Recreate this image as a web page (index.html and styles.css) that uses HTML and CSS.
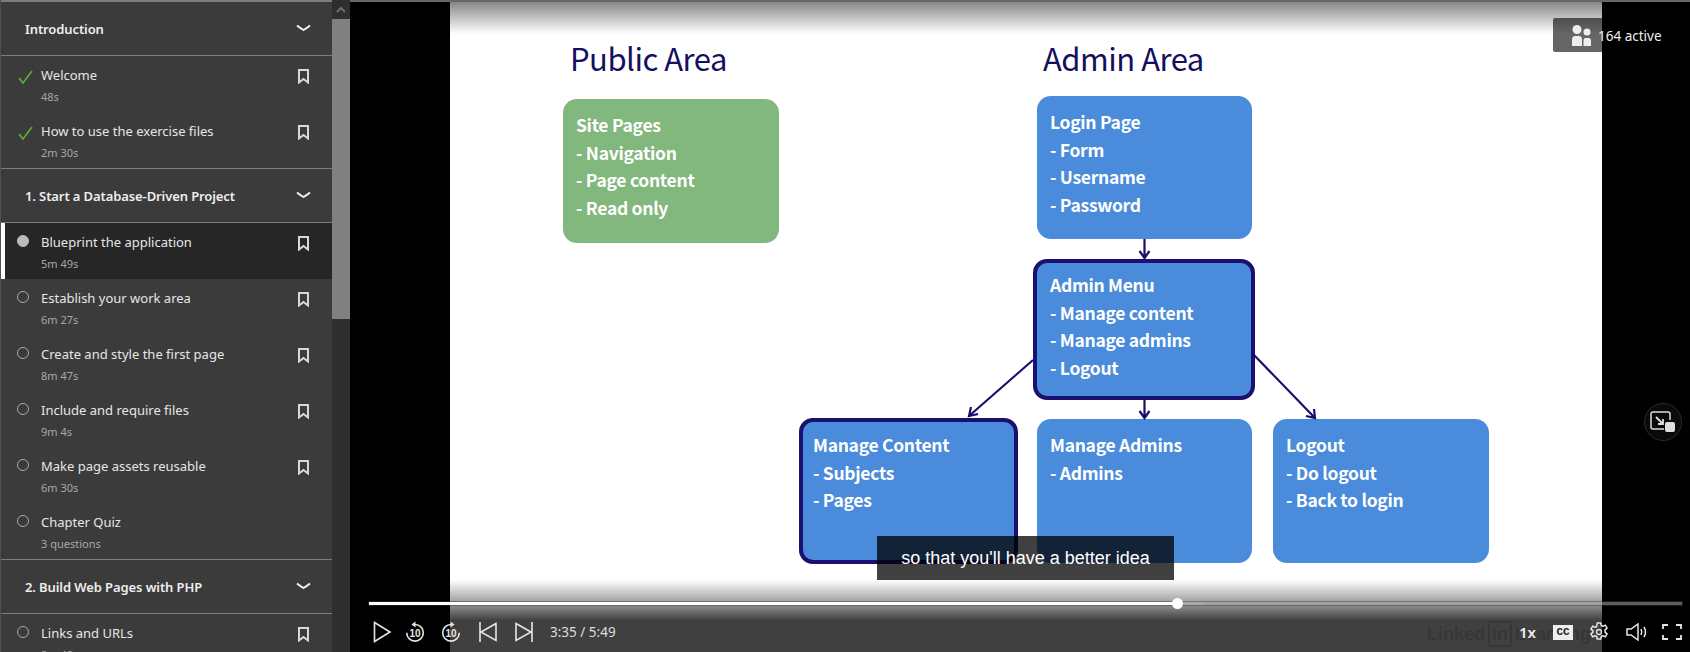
FILE: index.html
```html
<!DOCTYPE html>
<html lang="en">
<head>
    <meta charset="UTF-8">
    <title>Blueprint the application</title>
    <link rel="stylesheet" href="styles.css">
</head>
<body>
    <svg class="defs" width="0" height="0">
        <symbol id="bookmark" viewBox="0 0 11 15"><path d="M1 1h9v12.500L5.500 10 1 13.500z" fill="none" stroke="currentColor" stroke-width="2"/></symbol>
        <symbol id="chevron" viewBox="0 0 15 8"><path d="M1 1.500Q4 4 7.500 6 11 4 14 1.500" fill="none" stroke="currentColor" stroke-width="2"/></symbol>
        <symbol id="check" viewBox="0 0 15 14"><path d="M1 8l4 5L14 1" fill="none" stroke="#5fa83f" stroke-width="1.700"/></symbol>
    </svg>

    <aside class="sidebar">
        <div class="toc">
            <div class="chapter"><span>Introduction</span><svg class="chev"><use href="#chevron"/></svg></div>
            <div class="row"><svg class="check"><use href="#check"/></svg><div class="row-text"><p class="title">Welcome</p><p class="dur">48s</p></div><svg class="mark"><use href="#bookmark"/></svg></div>
            <div class="row"><svg class="check"><use href="#check"/></svg><div class="row-text"><p class="title">How to use the exercise files</p><p class="dur">2m 30s</p></div><svg class="mark"><use href="#bookmark"/></svg></div>

            <div class="chapter"><span>1. Start a Database-Driven Project</span><svg class="chev"><use href="#chevron"/></svg></div>
            <div class="row active"><i class="dot filled"></i><div class="row-text"><p class="title">Blueprint the application</p><p class="dur">5m 49s</p></div><svg class="mark"><use href="#bookmark"/></svg></div>
            <div class="row"><i class="dot"></i><div class="row-text"><p class="title">Establish your work area</p><p class="dur">6m 27s</p></div><svg class="mark"><use href="#bookmark"/></svg></div>
            <div class="row"><i class="dot"></i><div class="row-text"><p class="title">Create and style the first page</p><p class="dur">8m 47s</p></div><svg class="mark"><use href="#bookmark"/></svg></div>
            <div class="row"><i class="dot"></i><div class="row-text"><p class="title">Include and require files</p><p class="dur">9m 4s</p></div><svg class="mark"><use href="#bookmark"/></svg></div>
            <div class="row"><i class="dot"></i><div class="row-text"><p class="title">Make page assets reusable</p><p class="dur">6m 30s</p></div><svg class="mark"><use href="#bookmark"/></svg></div>
            <div class="row"><i class="dot"></i><div class="row-text"><p class="title">Chapter Quiz</p><p class="dur">3 questions</p></div></div>

            <div class="chapter"><span>2. Build Web Pages with PHP</span><svg class="chev"><use href="#chevron"/></svg></div>
            <div class="row"><i class="dot"></i><div class="row-text"><p class="title">Links and URLs</p><p class="dur">8m 48s</p></div><svg class="mark"><use href="#bookmark"/></svg></div>
        </div>
        <div class="scrollbar">
            <svg class="scroll-up" width="18" height="19" viewBox="0 0 18 19"><path d="M5 12l4-4 4 4" fill="none" stroke="#6c6c6c" stroke-width="2"/></svg>
            <div class="scroll-thumb"></div>
        </div>
    </aside>

    <main class="video">
        <div class="slide">
            <h2 class="area area-public">Public Area</h2>
            <h2 class="area area-admin">Admin Area</h2>

            <div class="node green n-site">Site Pages<br>- Navigation<br>- Page content<br>- Read only</div>
            <div class="node n-login">Login Page<br>- Form<br>- Username<br>- Password</div>
            <div class="node outlined n-menu">Admin Menu<br>- Manage content<br>- Manage admins<br>- Logout</div>
            <div class="node outlined n-content">Manage Content<br>- Subjects<br>- Pages</div>
            <div class="node n-admins">Manage Admins<br>- Admins</div>
            <div class="node n-logout">Logout<br>- Do logout<br>- Back to login</div>

            <!-- arrows use slide coordinates -->
            <svg class="arrows" width="1152" height="652" viewBox="0 0 1152 652">
                <g fill="none" stroke="#17106a" stroke-width="2.200">
                    <path d="M694.500 239V258M689.500 251l5 7 5-7"/>
                    <path d="M694.500 400V418M689.500 411l5 7 5-7"/>
                    <path d="M583 360L519 416M521 407l-2 9 9-2"/>
                    <path d="M804 355L865 418M864 409l1 9-9-2"/>
                </g>
            </svg>

            <div class="watermark">Linked<b>in</b>Learning</div>
        </div>

        <div class="shade-top"></div>
        <div class="shade-bottom"></div>
        <div class="top-line"></div>

        <div class="active-badge">
            <svg width="19" height="21" viewBox="0 0 19 21"><circle cx="5" cy="4.500" r="4.500" fill="#eee"/><circle cx="15" cy="7" r="3.500" fill="#eee"/><path d="M0 21v-6q0-4 3-4h4q3 0 3 4v6zM11.500 21v-5q0-3 2-3h3q2.500 0 2.500 3v5z" fill="#eee"/></svg>
            <span>164 active</span>
        </div>

        <div class="pip">
            <svg width="26" height="22" viewBox="0 0 26 22"><path d="M14 18H3q-2 0-2-2V3q0-2 2-2h15q2 0 2 2v6" fill="none" stroke="#ddd" stroke-width="1.500"/><path d="M6 6l7 7M8 13h5V8" fill="none" stroke="#ddd" stroke-width="1.800"/><rect x="15" y="11" width="10" height="10" rx="2" fill="#ddd"/></svg>
        </div>

        <div class="caption">so that you'll have a better idea</div>

        <div class="progress">
            <div class="buffered"></div>
            <div class="played"></div>
            <div class="knob"></div>
        </div>

        <div class="controls">
            <svg class="ctl play" width="19" height="22" viewBox="0 0 19 22"><path d="M1.500 1.500L17 11 1.500 20.500z" fill="none" stroke="#e6e6e6" stroke-width="1.600"/></svg>
            <svg class="ctl skip-back" width="20" height="22" viewBox="0 0 20 22"><path d="M10 3.500a8.300 8.300 0 1 1-8.300 8.300" fill="none" stroke="#e6e6e6" stroke-width="1.600"/><path d="M10.500 0.500L6.500 3.500l4 3z" fill="#e6e6e6"/><text x="10" y="16" class="ten">10</text></svg>
            <svg class="ctl skip-fwd" width="20" height="22" viewBox="0 0 20 22"><path d="M10 3.500a8.300 8.300 0 1 0 8.300 8.300" fill="none" stroke="#e6e6e6" stroke-width="1.600"/><path d="M9.500 0.500l4 3-4 3z" fill="#e6e6e6"/><text x="10" y="16" class="ten">10</text></svg>
            <svg class="ctl prev" width="18" height="20" viewBox="0 0 18 20"><path d="M1 0v20M17 1.500L2 10l15 8.500z" fill="none" stroke="#e6e6e6" stroke-width="1.600"/></svg>
            <svg class="ctl next" width="18" height="20" viewBox="0 0 18 20"><path d="M17 0v20M1 1.500L16 10 1 18.500z" fill="none" stroke="#e6e6e6" stroke-width="1.600"/></svg>
            <span class="time">3:35 / 5:49</span>
            <span class="spacer"></span>
            <span class="speed">1x</span>
            <span class="cc">CC</span>
            <svg class="ctl gear" width="20" height="20" viewBox="0 0 20 20"><path d="M8.200 1h3.600l.5 2.500 1.700.8 2.300-1.200 1.800 3-2 1.600v2.600l2 1.600-1.800 3-2.300-1.200-1.700.8-.5 2.500H8.200l-.5-2.500-1.700-.8-2.300 1.200-1.800-3 2-1.600V8.700l-2-1.600 1.800-3L6 5.300l1.700-.8z" fill="none" stroke="#e6e6e6" stroke-width="1.500" stroke-linejoin="round"/><circle cx="10" cy="10" r="2.500" fill="none" stroke="#e6e6e6" stroke-width="1.300"/></svg>
            <svg class="ctl volume" width="22" height="18" viewBox="0 0 22 18"><path d="M1 6h4l7-5v16l-7-5H1z" fill="none" stroke="#e6e6e6" stroke-width="1.500"/><path d="M15 6q1.500 3 0 6M18 4q3 5 0 10" fill="none" stroke="#e6e6e6" stroke-width="1.500"/></svg>
            <svg class="ctl full" width="20" height="16" viewBox="0 0 20 16"><path d="M1 5V1h5M14 1h5v4M19 11v4h-5M6 15H1v-4" fill="none" stroke="#e6e6e6" stroke-width="1.800"/></svg>
        </div>
    </main>
</body>
</html>
```

FILE: styles.css
```css
* { box-sizing: border-box; }
html, body { margin: 0; height: 100%; overflow: hidden; }
body { display: flex; background: #000; font-family: "Noto Sans", Arial, sans-serif; }
.defs { position: absolute; }

/* course list */
.sidebar { width: 350px; height: 652px; flex: none; display: flex; overflow: hidden; border-left: 1px solid #46525a; background: #3b3b3b; }
.toc { width: 331px; flex: none; border-top: 2px solid #7d7d7d; }
.chapter { height: 54px; display: flex; align-items: center; justify-content: space-between; padding: 0 21px 0 24px; border-bottom: 1px solid #7d7d7d; color: #eee; font-size: 13px; font-weight: 600; letter-spacing: -.1px; }
.row + .chapter { border-top: 1px solid #7d7d7d; height: 55px; }
.chev { width: 15px; height: 8px; color: #f2f2f2; margin-bottom: 2px; }
.row { height: 56px; position: relative; display: flex; padding: 10px 23px 0 17px; color: #e6e6e6; }
.row.active { background: #262626; border-left: 4px solid #fff; padding-left: 13px; }
.check { width: 15px; height: 14px; margin-top: 4px; flex: none; }
.dot { width: 12px; height: 12px; margin: 2px 3px 0 -1px; flex: none; border: 1px solid #aaa; border-radius: 50%; }
.dot.filled { background: #bbb; border-color: #bbb; }
.row-text { flex: 1; margin-left: 8px; }
.dot + .row-text { margin-left: 9px; }
.title { margin: 0; font-size: 13px; line-height: 18px; }
.dur { margin: 5px 0 0; font-size: 11px; line-height: 16px; color: #a8a8a8; }
.mark { width: 11px; height: 15px; margin-top: 3px; color: #d8d8d8; flex: none; }

.scrollbar { width: 18px; flex: none; background: #2e2e2e; }
.scroll-up { display: block; }
.scroll-thumb { height: 300px; background: #808080; }

/* player */
.video { position: relative; flex: 1; height: 652px; overflow: hidden; background: #000; }
.slide { position: relative; width: 1152px; height: 652px; margin-left: 100px; background: #fff; font-family: "Noto Sans CJK JP", "Noto Sans", sans-serif; }
.top-line { position: absolute; top: 0; left: 0; right: 0; height: 2px; background: #666; }
.shade-top { position: absolute; top: 0; left: 0; right: 0; height: 34px; background: linear-gradient(rgba(0,0,0,.5), rgba(0,0,0,0)); }
.shade-bottom { position: absolute; bottom: 0; left: 0; right: 0; height: 72px; background: linear-gradient(rgba(0,0,0,0), rgba(0,0,0,.34) 28%, rgba(0,0,0,.75) 56%); }

.area { position: absolute; margin: 0; font-size: 31px; font-weight: 400; line-height: 44px; letter-spacing: -.5px; color: #14105f; }
.area-public { left: 120px; top: 36px; }
.area-admin { left: 593px; top: 36px; }

/* diagram nodes: slide coordinates */
.node { position: absolute; padding: 12px 13px; border-radius: 14px; background: #4a8bdb; color: #fff; font-size: 17.500px; font-weight: 700; line-height: 27.700px; letter-spacing: -.3px; }
.node.green { background: #82b77d; }
.node.outlined { border: 4px solid #1a1070; padding: 9px 10px; }
.node.n-menu { padding: 8px 13px; }
.n-site { left: 113px; top: 99px; width: 216px; height: 144px; }
.n-login { left: 587px; top: 96px; width: 215px; height: 143px; }
.n-menu { left: 583px; top: 259px; width: 222px; height: 141px; }
.n-content { left: 349px; top: 418px; width: 219px; height: 146px; }
.n-admins { left: 587px; top: 419px; width: 215px; height: 144px; }
.n-logout { left: 823px; top: 419px; width: 216px; height: 144px; }
.arrows { position: absolute; left: 0; top: 0; }

/* sits under the bottom shade, so it comes out just darker than the bar */
.watermark { position: absolute; left: 977px; top: 621px; display: flex; align-items: center; gap: 3px; font-family: "Liberation Sans", sans-serif; font-size: 18px; font-weight: 700; line-height: 22px; color: #d8d8d8; white-space: nowrap; }
.watermark b { border: 2px solid #d8d8d8; border-radius: 3px; padding: 0 2px; }

.active-badge { position: absolute; left: 1203px; top: 18px; width: 120px; height: 34px; display: flex; align-items: center; gap: 7px; padding: 1px 0 0 19px; border-radius: 2px; background: rgba(0,0,0,.6); color: #eee; font-size: 13.500px; }

.pip { position: absolute; left: 1294px; top: 403px; width: 38px; height: 38px; display: flex; align-items: center; justify-content: center; border: 1px solid #2a2a2a; border-radius: 50%; background: #0a0a0a; }

.caption { position: absolute; left: 527px; top: 536px; width: 297px; height: 44px; display: flex; align-items: center; justify-content: center; background: rgba(0,0,0,.75); color: #fff; font-family: "Liberation Sans", Arial, sans-serif; font-size: 18px; }

.progress { position: absolute; left: 19px; top: 602px; width: 1313px; height: 3px; background: rgba(170,170,170,.55); box-shadow: 0 0 0 1px rgba(60,60,60,.45); }
.buffered { position: absolute; left: 0; top: 0; width: 836px; height: 3px; background: #aaa; }
.played { position: absolute; left: 0; top: 0; width: 809px; height: 3px; background: #fff; }
.knob { position: absolute; left: 803px; top: -4px; width: 11px; height: 11px; border-radius: 50%; background: #fff; }

.controls { position: absolute; left: 23px; right: 8px; top: 620px; height: 24px; display: flex; align-items: center; color: #e6e6e6; }
.ctl { flex: none; }
.play { margin-right: 13px; }
.skip-back { margin-right: 16px; }
.skip-fwd { margin-right: 18px; }
.prev { margin-right: 18px; }
.next { margin-right: 17px; }
.ten { font-family: "Liberation Sans", sans-serif; font-size: 10px; font-weight: 700; fill: #e6e6e6; text-anchor: middle; }
.time { font-size: 13.500px; color: #ddd; }
.spacer { flex: 1; }
.speed { font-size: 15px; font-weight: 600; color: #f0f0f0; margin-right: 17px; }
.cc { width: 20px; height: 15px; display: flex; align-items: center; justify-content: center; margin-right: 16px; background: #eee; color: #222; font-family: "Liberation Mono", monospace; font-size: 11px; font-weight: 700; }
.gear { margin-right: 17px; }
.volume { margin-right: 14px; }
```
